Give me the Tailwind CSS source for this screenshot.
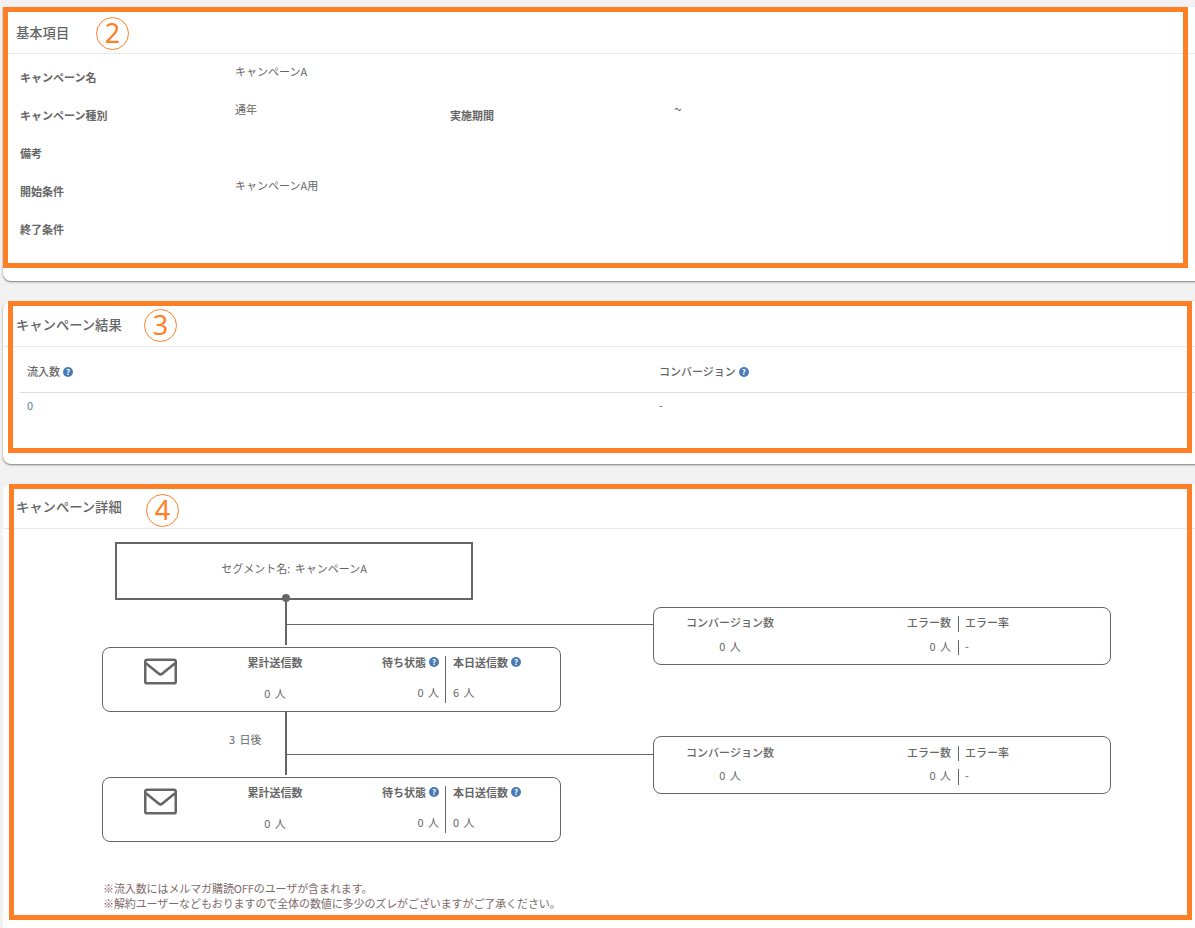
<!DOCTYPE html>
<html lang="ja">
<head>
  <meta charset="UTF-8" />
  <title>キャンペーン詳細</title>
  <script src="https://cdn.jsdelivr.net/npm/@tailwindcss/browser@4"></script>
</head>
<body class="bg-[#f2f2f2] font-['Noto_Sans_CJK_JP','Noto_Sans',sans-serif] text-[11px] text-[#666] [word-spacing:2px]">
<div class="relative h-[928px] overflow-hidden pl-[3px] pt-[7px]">

  <!-- basic info -->
  <section class="-mr-[10px] h-[274px] rounded-b-lg bg-white shadow-[0_1px_2px_rgba(0,0,0,0.5)]">
    <h2 class="flex h-[47px] items-center border-b border-[#e8e8e8] pl-[13px] pt-[5px] text-[13.3px] font-medium">基本項目</h2>
    <div class="grid grid-cols-[215px_215px_224px_1fr] auto-rows-[38px] pl-[17px] pt-[4px]">
      <div class="flex items-center font-bold">キャンペーン名</div>
      <div class="col-span-3 pt-[5px]">キャンペーンA</div>
      <div class="flex items-center font-bold">キャンペーン種別</div>
      <div class="pt-[5px]">通年</div>
      <div class="flex items-center font-bold">実施期間</div>
      <div class="text-[14px] leading-[18px] pt-[4px]">~</div>
      <div class="flex items-center font-bold">備考</div>
      <div class="col-span-3"></div>
      <div class="flex items-center font-bold">開始条件</div>
      <div class="col-span-3 pt-[5px]">キャンペーンA用</div>
      <div class="flex items-center font-bold">終了条件</div>
      <div class="col-span-3"></div>
    </div>
  </section>

  <!-- results -->
  <section class="-mr-[10px] mt-[20px] h-[163px] rounded-lg bg-white shadow-[0_1px_2px_rgba(0,0,0,0.5)]">
    <h2 class="flex h-[46px] items-center border-b border-[#e8e8e8] pl-[13px] pt-[2px] text-[13.3px] font-medium">キャンペーン結果</h2>
    <div class="ml-[17px]">
      <div class="grid h-[46px] grid-cols-[632px_1fr] items-center border-b border-[#ddd] pl-[7px] pt-[4px]">
        <div class="flex items-center gap-[3px] font-medium">流入数 <span class="flex h-[10px] w-[10px] items-center justify-center rounded-full bg-[#4a7ab5] text-[8px] leading-none font-bold text-white">?</span></div>
        <div class="flex items-center gap-[3px] font-medium">コンバージョン <span class="flex h-[10px] w-[10px] items-center justify-center rounded-full bg-[#4a7ab5] text-[8px] leading-none font-bold text-white">?</span></div>
      </div>
      <div class="grid grid-cols-[632px_1fr] pl-[7px] pt-[4px]">
        <div class="text-[#5a8296]">0</div>
        <div>-</div>
      </div>
    </div>
  </section>

  <!-- details -->
  <section class="-mr-[10px] mt-[20px] h-[444px] rounded-t-lg bg-white">
    <h2 class="flex h-[45px] items-center border-b border-[#e8e8e8] pl-[13px] pt-[2px] text-[13.3px] font-medium">キャンペーン詳細</h2>
    <div class="relative h-[352px]">
      <div class="absolute left-[112px] top-[13px] flex h-[58px] w-[358px] items-center justify-center border-2 border-[#666] pb-[6px]">セグメント名: キャンペーンA</div>
      <div class="absolute left-[279px] top-[65px] h-[8px] w-[8px] rounded-full bg-[#666]"></div>
      <div class="absolute left-[282px] top-[71px] h-[45px] w-[2px] bg-[#666]"></div>
      <div class="absolute left-[282px] top-[183px] h-[63px] w-[2px] bg-[#666]"></div>
      <div class="absolute left-[284px] top-[95px] h-px w-[366px] bg-[#666]"></div>
      <div class="absolute left-[284px] top-[225px] h-px w-[366px] bg-[#666]"></div>
      <div class="absolute left-[226px] top-[202px]">3 日後</div>

      <!-- mail 1 -->
      <div class="absolute left-[99px] top-[118px] flex h-[65px] w-[459px] rounded-lg border border-[#666] leading-[12px]">
        <div class="w-[118px] pl-[41px] pt-[10px]">
          <svg width="33" height="27" viewBox="0 0 34 27" fill="none" stroke="#666" stroke-width="2.6"><rect x="1.3" y="1.3" width="31.4" height="24.4" rx="2"/><path d="M2 5l13 10.5a3 3 0 0 0 4 0L32 5"/></svg>
        </div>
        <div class="flex h-[56px] w-[108px] flex-col items-center justify-between pb-[5px] pt-[8px]"><span class="font-bold">累計送信数</span><span>0 人</span></div>
        <div class="mt-[8px] flex h-[47px] w-[117px] flex-col items-end justify-between border-r border-[#666] pb-[5px] pr-[6px]">
          <span class="flex items-center gap-[3px] font-bold">待ち状態 <span class="flex h-[10px] w-[10px] items-center justify-center rounded-full bg-[#4a7ab5] text-[8px] leading-none font-bold text-white">?</span></span>
          <span>0 人</span>
        </div>
        <div class="mt-[8px] flex h-[47px] flex-col items-start justify-between pb-[5px] pl-[7px]">
          <span class="flex items-center gap-[3px] font-bold">本日送信数 <span class="flex h-[10px] w-[10px] items-center justify-center rounded-full bg-[#4a7ab5] text-[8px] leading-none font-bold text-white">?</span></span>
          <span>6 人</span>
        </div>
      </div>

      <!-- mail 2 -->
      <div class="absolute left-[99px] top-[248px] flex h-[65px] w-[459px] rounded-lg border border-[#666] leading-[12px]">
        <div class="w-[118px] pl-[41px] pt-[10px]">
          <svg width="33" height="27" viewBox="0 0 34 27" fill="none" stroke="#666" stroke-width="2.6"><rect x="1.3" y="1.3" width="31.4" height="24.4" rx="2"/><path d="M2 5l13 10.5a3 3 0 0 0 4 0L32 5"/></svg>
        </div>
        <div class="flex h-[56px] w-[108px] flex-col items-center justify-between pb-[5px] pt-[8px]"><span class="font-bold">累計送信数</span><span>0 人</span></div>
        <div class="mt-[8px] flex h-[47px] w-[117px] flex-col items-end justify-between border-r border-[#666] pb-[5px] pr-[6px]">
          <span class="flex items-center gap-[3px] font-bold">待ち状態 <span class="flex h-[10px] w-[10px] items-center justify-center rounded-full bg-[#4a7ab5] text-[8px] leading-none font-bold text-white">?</span></span>
          <span>0 人</span>
        </div>
        <div class="mt-[8px] flex h-[47px] flex-col items-start justify-between pb-[5px] pl-[7px]">
          <span class="flex items-center gap-[3px] font-bold">本日送信数 <span class="flex h-[10px] w-[10px] items-center justify-center rounded-full bg-[#4a7ab5] text-[8px] leading-none font-bold text-white">?</span></span>
          <span>0 人</span>
        </div>
      </div>

      <!-- conversion 1 -->
      <div class="absolute left-[650px] top-[78px] grid h-[58px] w-[458px] grid-cols-[152px_152px_1fr] grid-rows-[16px_15px] content-start gap-y-[8px] rounded-lg border border-[#666] pt-[8px] leading-[13px]">
        <div class="text-center font-medium">コンバージョン数</div>
        <div class="pr-[7px] text-right font-medium">エラー数</div>
        <div class="border-l border-[#666] pl-[6px] font-medium">エラー率</div>
        <div class="text-center">0 人</div>
        <div class="pr-[7px] text-right">0 人</div>
        <div class="border-l border-[#666] pl-[6px]">-</div>
      </div>

      <!-- conversion 2 -->
      <div class="absolute left-[650px] top-[207px] grid h-[58px] w-[458px] grid-cols-[152px_152px_1fr] grid-rows-[15px_16px] content-start gap-y-[8px] rounded-lg border border-[#666] pt-[9px] leading-[13px]">
        <div class="text-center font-medium">コンバージョン数</div>
        <div class="pr-[7px] text-right font-medium">エラー数</div>
        <div class="border-l border-[#666] pl-[6px] font-medium">エラー率</div>
        <div class="text-center">0 人</div>
        <div class="pr-[7px] text-right">0 人</div>
        <div class="border-l border-[#666] pl-[6px]">-</div>
      </div>
    </div>
    <p class="ml-[100px] leading-[15px] tracking-[-0.1px] text-[#7d6a6a]">※流入数にはメルマガ購読OFFのユーザが含まれます。<br />※解約ユーザーなどもおりますので全体の数値に多少のズレがございますがご了承ください。</p>
  </section>

  <!-- annotation frames -->
  <div class="absolute left-[3px] top-[7px] h-[261px] w-[1185px] border-[5px] border-[#ff7f27]"></div>
  <div class="absolute left-[8px] top-[301px] h-[152px] w-[1184px] border-[5px] border-[#ff7f27]"></div>
  <div class="absolute left-[9px] top-[484px] h-[436px] w-[1183px] border-[5px] border-[#ff7f27]"></div>
  <div class="absolute left-[96px] top-[17px] flex h-[33px] w-[33px] items-center justify-center rounded-full border border-[#ff7f27] font-['Noto_Sans'] text-[27px] text-[#ff7f27]">2</div>
  <div class="absolute left-[144px] top-[309px] flex h-[33px] w-[33px] items-center justify-center rounded-full border border-[#ff7f27] font-['Noto_Sans'] text-[27px] text-[#ff7f27]">3</div>
  <div class="absolute left-[146px] top-[494px] flex h-[33px] w-[33px] items-center justify-center rounded-full border border-[#ff7f27] font-['Noto_Sans'] text-[27px] text-[#ff7f27]">4</div>
</div>
</body>
</html>
